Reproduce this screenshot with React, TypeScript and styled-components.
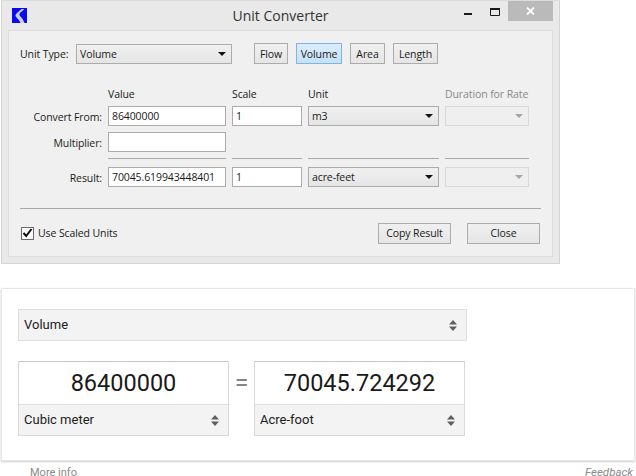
import React from "react";
import styled, { createGlobalStyle, css } from "styled-components";

const GlobalStyle = createGlobalStyle`
  html, body {
    margin: 0;
    padding: 0;
    background: #fff;
    overflow: hidden;
  }
  * {
    box-sizing: border-box;
  }
`;

const Page = styled.div`
  width: 636px;
  height: 476px;
  padding-left: 1px;
  overflow: hidden;
`;

/* desktop dialog */
const Window = styled.div`
  width: 559px;
  height: 264px;
  background: #e9e9e9;
  border: 1px solid #d4d4d4;
  border-top-color: #dcdcdc;
  padding: 0 6px 6px;
  display: flex;
  flex-direction: column;
  font-family: "Open Sans", "Noto Sans", sans-serif;
  font-size: 10.5px;
  letter-spacing: -0.1px;
  color: #1a1a1a;
`;

const TitleBar = styled.div`
  height: 29px;
  flex: none;
  display: grid;
  grid-template-columns: 1fr auto 1fr;
`;

const AppLogo = styled.svg`
  width: 15px;
  height: 15px;
  margin: 7px 0 0 4px;
`;

const TitleText = styled.div`
  font-size: 14px;
  letter-spacing: 0;
  line-height: 30px;
  color: #333;
`;

const WindowControls = styled.div`
  display: flex;
  justify-content: flex-end;
  align-items: flex-start;
`;

const ControlIcon = styled.svg`
  display: block;
`;

const MinimizeSlot = styled.div`
  width: 26px;
  height: 20px;
  padding: 12px 0 0 0;
`;

const MaximizeSlot = styled.div`
  width: 18px;
  height: 20px;
  padding-top: 7px;
`;

const CloseSlot = styled.div`
  width: 45px;
  height: 20px;
  background: #bababa;
  display: flex;
  align-items: center;
  justify-content: center;
`;

const Panel = styled.div`
  flex: 1;
  background: #f0f0f0;
  border: 1px solid #dcdcdc;
  padding: 12px 11px 0 11px;
`;

const UnitTypeRow = styled.div`
  display: flex;
  align-items: center;
  height: 21px;
`;

const UnitTypeLabel = styled.span`
  width: 56px;
  flex: none;
`;

const ToggleGroup = styled.div`
  display: flex;
  gap: 8px;
  margin-left: 22px;
`;

const ToggleButton = styled.button<{ $active?: boolean; $w: number }>`
  width: ${(p) => p.$w}px;
  height: 21px;
  padding: 0;
  font: inherit;
  letter-spacing: inherit;
  color: inherit;
  border: 1px solid #acacac;
  background: linear-gradient(#f0f0f0, #e5e5e5);
  ${(p) =>
    p.$active &&
    css`
      border-color: #7eb4ea;
      background: linear-gradient(#dcedfc, #c6e1f9);
    `}
`;

const FormGrid = styled.div`
  display: grid;
  grid-template-columns: 82px 118px 70px 131px 84px;
  column-gap: 6px;
  row-gap: 6px;
  grid-template-rows: 13px 20px 20px 3px 20px;
  margin-top: 23px;
  align-items: center;
`;

const ColumnHead = styled.div<{ $muted?: boolean }>`
  line-height: 13px;
  padding-top: 1px;
  white-space: nowrap;
  color: ${(p) => (p.$muted ? "#8a8a8a" : "inherit")};
`;

const FieldLabel = styled.div`
  text-align: right;
  padding-top: 1px;
`;

const TextField = styled.input`
  width: 100%;
  height: 20px;
  border: 1px solid #ababab;
  background: #fff;
  padding: 0 0 0 3px;
  font: inherit;
  letter-spacing: inherit;
  color: inherit;
  outline: none;
`;

const Rule = styled.div`
  height: 1px;
  align-self: start;
  background: #a9a9a9;
`;

const Empty = styled.div``;

const ComboBox = styled.div<{ $w?: number; $disabled?: boolean }>`
  width: ${(p) => (p.$w ? `${p.$w}px` : "100%")};
  height: 20px;
  flex: none;
  display: flex;
  align-items: center;
  justify-content: space-between;
  padding: 0 6px 0 3px;
  border: 1px solid #acacac;
  background: linear-gradient(#f0f0f0, #e5e5e5);
  ${(p) =>
    p.$disabled &&
    css`
      border-color: #d9d9d9;
      background: #efefef;
    `}
`;

const Arrow = styled.span<{ $disabled?: boolean }>`
  width: 0;
  height: 0;
  margin-right: -1px;
  border-left: 4px solid transparent;
  border-right: 4px solid transparent;
  border-top: 4px solid ${(p) => (p.$disabled ? "#a6a6a6" : "#111")};
`;

const Divider = styled.div`
  height: 1px;
  margin: 21px 0 0 0;
  width: 521px;
  background: #a9a9a9;
`;

const DialogFooter = styled.div`
  display: flex;
  align-items: center;
  margin-top: 13px;
  height: 22px;
  width: 520px;
`;

const CheckRow = styled.label`
  display: flex;
  align-items: center;
  gap: 4px;
  margin-left: 1px;
  flex: 1;
`;

const CheckBox = styled.span`
  width: 13px;
  height: 13px;
  border: 1px solid #6b6b6b;
  background: #fff;
  display: flex;
  align-items: center;
  justify-content: center;
`;

const DialogButton = styled.button<{ $w: number; $gap?: number }>`
  width: ${(p) => p.$w}px;
  height: 21px;
  margin-left: ${(p) => p.$gap ?? 0}px;
  padding: 0;
  font: inherit;
  letter-spacing: inherit;
  color: inherit;
  border: 1px solid #acacac;
  background: linear-gradient(#f0f0f0, #e5e5e5);
`;

/* web widget */
const Card = styled.div`
  width: 634px;
  height: 173px;
  margin-top: 24px;
  background: #fff;
  border: 1px solid #e6e6e6;
  box-shadow: 0 1px 2px rgba(0, 0, 0, 0.2);
  padding: 20px 16px 0;
  font-family: Roboto, "Liberation Sans", sans-serif;
  color: #212121;
`;

const SelectRow = styled.div<{ $w?: number; $h: number; $boxed?: boolean }>`
  width: ${(p) => (p.$w ? `${p.$w}px` : "100%")};
  height: ${(p) => p.$h}px;
  display: flex;
  align-items: center;
  justify-content: space-between;
  padding: 0 9px 0 5px;
  background: #f3f3f3;
  font-size: 13px;
  ${(p) =>
    p.$boxed
      ? css`
          border: 1px solid #dedede;
        `
      : css`
          border-top: 1px solid #dedede;
        `}
`;

const SelectText = styled.span`
  margin-bottom: 2px;
`;

const Spinner = styled.svg`
  display: block;
  flex: none;
`;

const Converter = styled.div`
  display: flex;
  margin-top: 20px;
`;

const ValueBox = styled.div`
  width: 211px;
  height: 75px;
  border: 1px solid #d9d9d9;
  border-top-color: #c6c6c6;
  border-radius: 1px;
`;

const ValueText = styled.div`
  height: 42px;
  line-height: 42px;
  text-align: center;
  font-size: 23.5px;
  color: #1a1a1a;
`;

const EqualsSign = styled.div`
  width: 25px;
  text-align: center;
  font-size: 25px;
  line-height: 43px;
  color: #858585;
`;

const LinksRow = styled.div`
  display: flex;
  justify-content: space-between;
  align-items: baseline;
  width: 634px;
  padding: 4px 2px 0 29px;
  font-family: Roboto, "Liberation Sans", sans-serif;
  font-size: 11px;
  line-height: 14px;
  color: #8a8a8a;
`;

const Feedback = styled.span`
  font-size: 11.5px;
  font-style: italic;
`;

const UpDown = () => (
  <Spinner width="8" height="11" viewBox="0 0 8 11">
    <path d="M4 0 L8 4.5 H0 Z M0 6.5 H8 L4 11 Z" fill="#5f5f5f" />
  </Spinner>
);

export default function App() {
  return (
    <Page>
      <GlobalStyle />
      <Window>
        <TitleBar>
          <AppLogo viewBox="0 0 15 15">
            <rect width="15" height="15" fill="#0a0af0" />
            <path
              d="M9.5 1 H12.5 L8 5 Q6.5 6.5 8 8 Q11 10.5 12.5 15 H8.5 Q7 11.5 4.5 9.5 Q2.5 7.5 4.5 5.5 Z"
              fill="#c9cdf4"
            />
          </AppLogo>
          <TitleText>Unit Converter</TitleText>
          <WindowControls>
            <MinimizeSlot>
              <ControlIcon width="8" height="2" viewBox="0 0 8 2">
                <rect width="8" height="2" fill="#1a1a1a" />
              </ControlIcon>
            </MinimizeSlot>
            <MaximizeSlot>
              <ControlIcon width="10" height="8" viewBox="0 0 10 8">
                <path d="M0.5 1 H9.5 V7.5 H0.5 Z" fill="none" stroke="#1a1a1a" />
                <rect width="10" height="2" fill="#1a1a1a" />
              </ControlIcon>
            </MaximizeSlot>
            <CloseSlot>
              <ControlIcon width="9" height="8" viewBox="0 0 9 8">
                <path d="M1 0.5 L8 7.5 M8 0.5 L1 7.5" stroke="#fff" strokeWidth="1.8" />
              </ControlIcon>
            </CloseSlot>
          </WindowControls>
        </TitleBar>
        <Panel>
          <UnitTypeRow>
            <UnitTypeLabel>Unit Type:</UnitTypeLabel>
            <ComboBox $w={156}>
              Volume
              <Arrow />
            </ComboBox>
            <ToggleGroup>
              <ToggleButton $w={34}>Flow</ToggleButton>
              <ToggleButton $w={46} $active>
                Volume
              </ToggleButton>
              <ToggleButton $w={35}>Area</ToggleButton>
              <ToggleButton $w={45}>Length</ToggleButton>
            </ToggleGroup>
          </UnitTypeRow>

          <FormGrid>
            <Empty />
            <ColumnHead>Value</ColumnHead>
            <ColumnHead>Scale</ColumnHead>
            <ColumnHead>Unit</ColumnHead>
            <ColumnHead $muted>Duration for Rate</ColumnHead>

            <FieldLabel>Convert From:</FieldLabel>
            <TextField readOnly value="86400000" />
            <TextField readOnly value="1" />
            <ComboBox>
              m3
              <Arrow />
            </ComboBox>
            <ComboBox $disabled>
              <span />
              <Arrow $disabled />
            </ComboBox>

            <FieldLabel>Multiplier:</FieldLabel>
            <TextField readOnly value="" />
            <Empty />
            <Empty />
            <Empty />

            <Empty />
            <Rule />
            <Rule />
            <Rule />
            <Rule />

            <FieldLabel>Result:</FieldLabel>
            <TextField readOnly value="70045.619943448401" />
            <TextField readOnly value="1" />
            <ComboBox>
              acre-feet
              <Arrow />
            </ComboBox>
            <ComboBox $disabled>
              <span />
              <Arrow $disabled />
            </ComboBox>
          </FormGrid>

          <Divider />

          <DialogFooter>
            <CheckRow>
              <CheckBox>
                <svg width="11" height="10" viewBox="0 0 11 10">
                  <path d="M1.5 5 L4.2 8 L9.5 1" fill="none" stroke="#111" strokeWidth="2" />
                </svg>
              </CheckBox>
              Use Scaled Units
            </CheckRow>
            <DialogButton $w={73}>Copy Result</DialogButton>
            <DialogButton $w={73} $gap={16}>
              Close
            </DialogButton>
          </DialogFooter>
        </Panel>
      </Window>

      <Card>
        <SelectRow $w={449} $h={32} $boxed>
          <SelectText>Volume</SelectText>
          <UpDown />
        </SelectRow>
        <Converter>
          <ValueBox>
            <ValueText>86400000</ValueText>
            <SelectRow $h={31}>
              <SelectText>Cubic meter</SelectText>
              <UpDown />
            </SelectRow>
          </ValueBox>
          <EqualsSign>=</EqualsSign>
          <ValueBox>
            <ValueText>70045.724292</ValueText>
            <SelectRow $h={31}>
              <SelectText>Acre-foot</SelectText>
              <UpDown />
            </SelectRow>
          </ValueBox>
        </Converter>
      </Card>
      <LinksRow>
        <span>More info</span>
        <Feedback>Feedback</Feedback>
      </LinksRow>
    </Page>
  );
}
